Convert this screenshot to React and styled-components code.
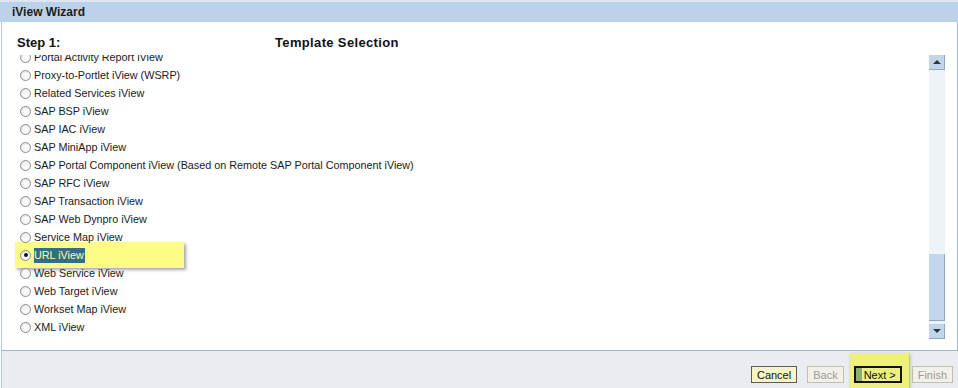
import React from 'react';
import styled, { createGlobalStyle } from 'styled-components';

const GlobalStyle = createGlobalStyle`
  html, body {
    margin: 0;
    padding: 0;
    background: #fff;
  }
  body {
    font-family: "Liberation Sans", Arial, sans-serif;
  }
`;

const templates = [
  'Portal Activity Report iView',
  'Proxy-to-Portlet iView (WSRP)',
  'Related Services iView',
  'SAP BSP iView',
  'SAP IAC iView',
  'SAP MiniApp iView',
  'SAP Portal Component iView (Based on Remote SAP Portal Component iView)',
  'SAP RFC iView',
  'SAP Transaction iView',
  'SAP Web Dynpro iView',
  'Service Map iView',
  'URL iView',
  'Web Service iView',
  'Web Target iView',
  'Workset Map iView',
  'XML iView',
];

const Wizard = styled.div`
  width: 958px;
  height: 388px;
  display: flex;
  flex-direction: column;
  border-top: 2px solid #dbe6f2;
  box-sizing: border-box;
`;

const TitleBar = styled.div`
  height: 20px;
  flex: none;
  display: flex;
  align-items: center;
  padding-left: 12px;
  background: #bcd2e8;
  color: #1c1c1c;
  font-size: 12px;
  font-weight: bold;
`;

const Body = styled.div`
  flex: 1;
  display: flex;
  flex-direction: column;
  margin-left: 1px;
  border-left: 1px solid #b3cae1;
`;

const Panel = styled.div`
  height: 329px;
  flex: none;
  box-sizing: border-box;
  display: flex;
  flex-direction: column;
  background: #fff;
  border-right: 1px solid #9db7d0;
  border-bottom: 1px solid #9db7d0;
`;

const StepRow = styled.div`
  height: 33px;
  flex: none;
  box-sizing: border-box;
  display: flex;
  padding: 13px 0 0 15px;
  font-size: 13px;
  font-weight: bold;
  color: #111;
  line-height: 16px;
`;

const StepLabel = styled.div`
  width: 258px;
`;

const StepTitle = styled.div`
  letter-spacing: 0.35px;
`;

const ScrollArea = styled.div`
  height: 290px;
  display: flex;
`;

const Viewport = styled.div`
  flex: 1;
  overflow: hidden;
`;

const List = styled.ul`
  list-style: none;
  margin: -7px 0 0;
  padding: 0 0 0 18px;
`;

const Row = styled.li`
  position: relative;
  height: 18px;
  display: flex;
  align-items: center;
  font-size: 10.8px;
  color: #1a1a1a;
  white-space: nowrap;
`;

const Highlight = styled.span`
  position: absolute;
  left: -5px;
  top: -4px;
  width: 169px;
  height: 26px;
  background: #fdfd85;
  box-shadow: 2px 2px 3px rgba(0, 0, 0, 0.35);
  z-index: 1;
`;

const RowContent = styled.span`
  position: relative;
  z-index: 2;
  display: flex;
  align-items: center;
`;

const Radio = styled.span`
  width: 11px;
  height: 11px;
  box-sizing: border-box;
  margin-right: 3px;
  border-radius: 50%;
  border: 1px solid #8c8c8c;
  background: radial-gradient(circle at 60% 60%, #ffffff 0%, #f4f4f4 50%, #d8d8d8 100%);
  display: flex;
  align-items: center;
  justify-content: center;

  &::after {
    content: '';
    width: 4px;
    height: 4px;
    border-radius: 50%;
    background: ${(p) => (p.$checked ? '#111' : 'transparent')};
  }
`;

const Selected = styled.span`
  background: #336d89;
  color: #ffff9c;
  padding: 1px 1px 2px 0;
`;

const Scrollbar = styled.div`
  width: 16px;
  margin: 0 12px 0 0;
  display: flex;
  flex-direction: column;
  height: 284px;
`;

const ArrowButton = styled.div`
  height: 15px;
  flex: none;
  box-sizing: border-box;
  background: #c1d6ea;
  border-right: 1px solid #8fa8c1;
  border-bottom: 1px solid #8fa8c1;
  display: flex;
  align-items: center;
  justify-content: center;

  &::after {
    content: '';
    border-left: 4px solid transparent;
    border-right: 4px solid transparent;
    ${(p) => (p.$down ? 'border-top' : 'border-bottom')}: 4px solid #2b3440;
  }
`;

const Track = styled.div`
  flex: 1;
  position: relative;
  background: #eef3f8;
`;

const Thumb = styled.div`
  position: absolute;
  left: 0;
  right: 0;
  box-sizing: border-box;
  background: #c1d6ea;
  border-right: 1px solid #8fa8c1;
  border-bottom: 1px solid #8fa8c1;
`;

const Footer = styled.div`
  flex: 1;
  background: #e9edf1;
  display: flex;
  justify-content: flex-end;
  align-items: flex-start;
  gap: 10px;
  padding: 15px 5px 0 0;
`;

const Button = styled.button`
  position: relative;
  height: 17px;
  box-sizing: border-box;
  padding: 0 5px;
  font-family: "Liberation Sans", Arial, sans-serif;
  font-size: 11px;
  line-height: 14px;
  white-space: nowrap;
  border-radius: 0;
  cursor: default;
  color: ${(p) => (p.disabled ? '#9c9c9c' : '#111')};
  background: ${(p) => (p.disabled ? '#f2f0e8' : '#fcf3c8')};
  border: 1px solid ${(p) => (p.disabled ? '#c3bfae' : '#5c5c5c')};
`;

const NextButton = styled(Button)`
  width: 48px;
  padding: 0 0 0 8px;
  text-align: left;
  border: 2px solid #111;
  background: linear-gradient(to right, #8cb06c 0, #8cb06c 6px, #eef07e 6px);
  z-index: 2;
`;

const NextWrap = styled.div`
  position: relative;
  display: flex;
`;

const NextGlow = styled.span`
  position: absolute;
  left: -4px;
  top: -13px;
  width: 59px;
  height: 40px;
  background: #eef07e;
  box-shadow: 1px 1px 3px rgba(0, 0, 0, 0.3);
  z-index: 1;
`;

const trackHeight = 252;
const thumbTop = 184;
const thumbHeight = 67;

export default function App() {
  const selected = 'URL iView';
  return (
    <>
      <GlobalStyle />
      <Wizard>
        <TitleBar>iView Wizard</TitleBar>
        <Body>
          <Panel>
            <StepRow>
              <StepLabel>Step 1:</StepLabel>
              <StepTitle>Template Selection</StepTitle>
            </StepRow>
            <ScrollArea>
              <Viewport>
                <List>
                  {templates.map((name) => {
                    const checked = name === selected;
                    return (
                      <Row key={name}>
                        {checked && <Highlight />}
                        <RowContent>
                          <Radio $checked={checked} />
                          {checked ? <Selected>{name}</Selected> : name}
                        </RowContent>
                      </Row>
                    );
                  })}
                </List>
              </Viewport>
              <Scrollbar>
                <ArrowButton />
                <Track>
                  <Thumb style={{ top: thumbTop, height: Math.min(thumbHeight, trackHeight) }} />
                </Track>
                <ArrowButton $down />
              </Scrollbar>
            </ScrollArea>
          </Panel>
          <Footer>
            <Button>Cancel</Button>
            <Button disabled>Back</Button>
            <NextWrap>
              <NextGlow />
              <NextButton>Next &gt;</NextButton>
            </NextWrap>
            <Button disabled>Finish</Button>
          </Footer>
        </Body>
      </Wizard>
    </>
  );
}
